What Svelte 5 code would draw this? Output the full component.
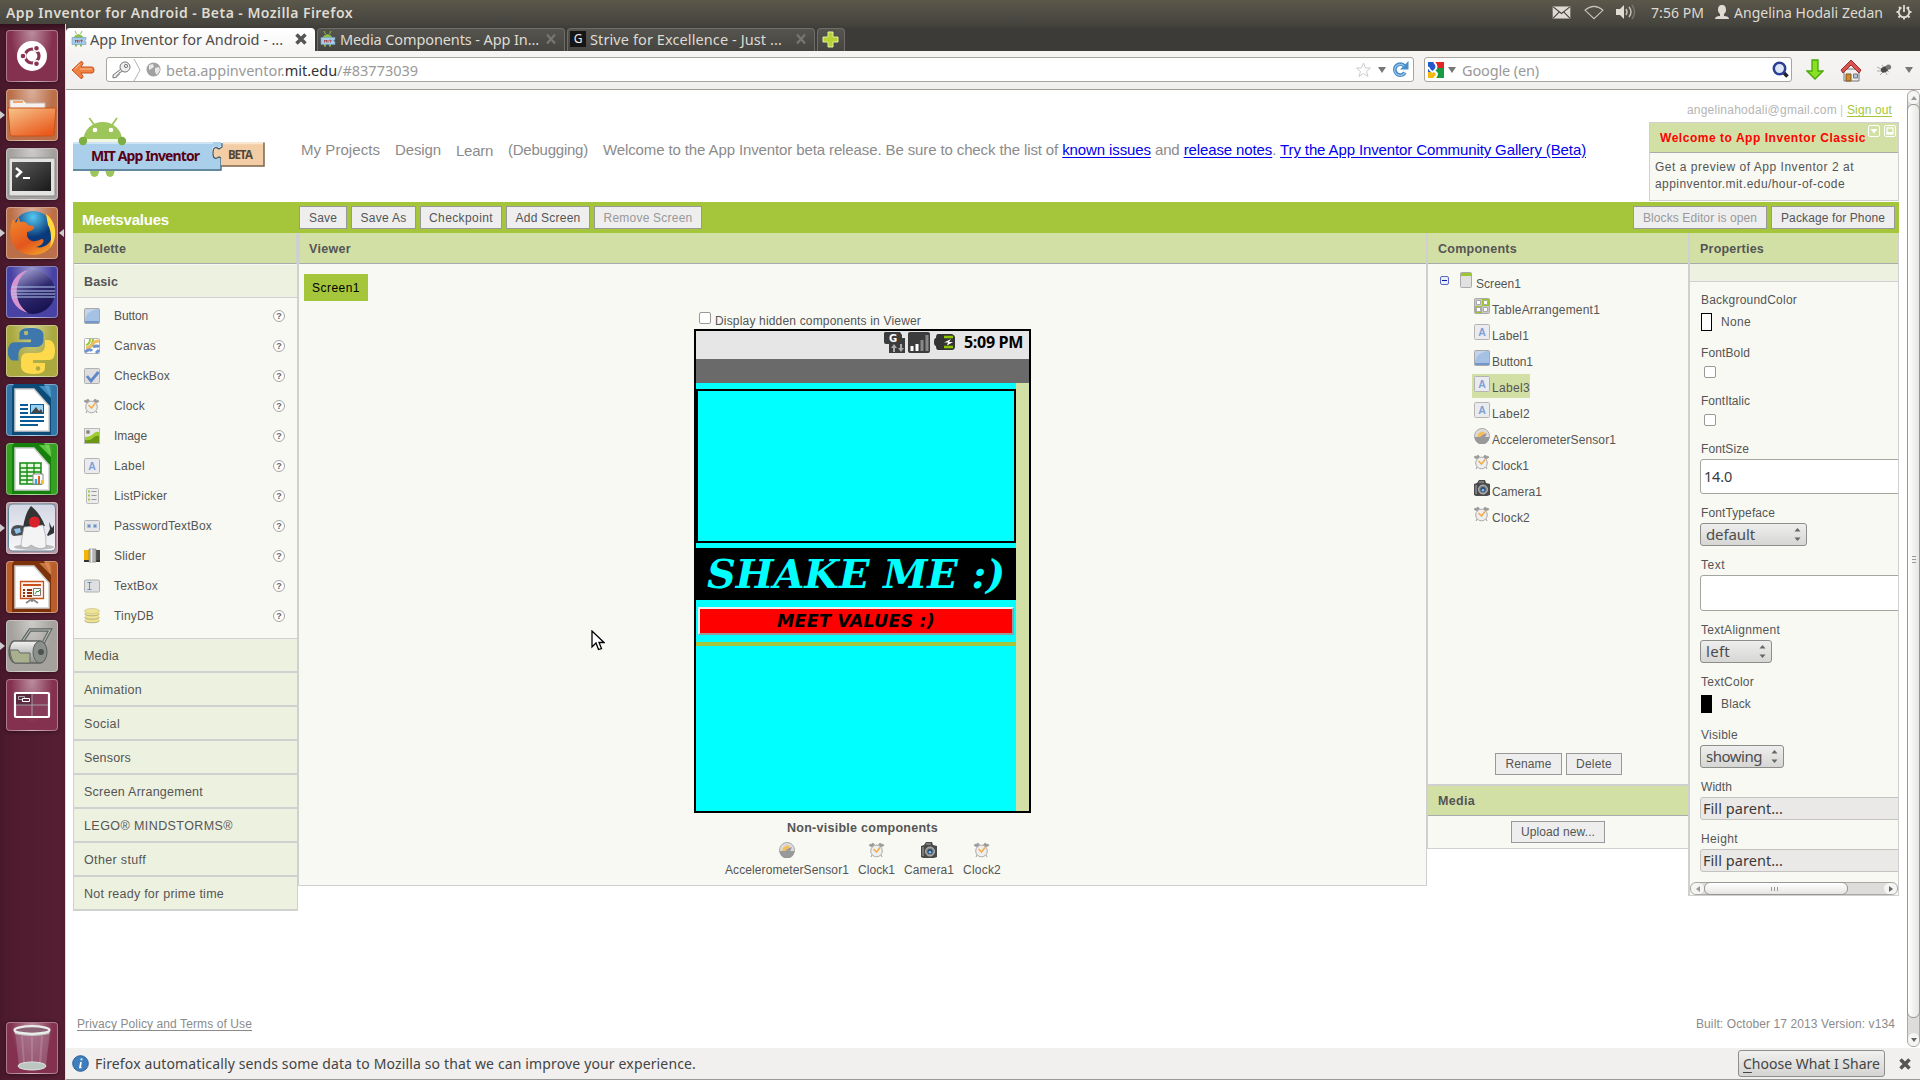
<script>
  // Spreads a run of text over a given width by adjusting its letter spacing.
  function fit(node, width) {
    if (!width) return;
    const natural = node.getBoundingClientRect().width;
    const count = node.textContent.length;
    node.style.letterSpacing = (width - natural) / count + 'px';
  }

  const launcher = ['ubuntu', 'files', 'terminal', 'firefox', 'eclipse', 'python', 'writer', 'calc', 'java', 'impress', 'ink', 'workspaces'];
  const running = { files: true, firefox: true, java: true, ink: true };

  const basic = [
    ['Button', 'button', 34], ['Canvas', 'canvas', 42], ['CheckBox', 'checkbox', 56], ['Clock', 'clock', 31],
    ['Image', 'image', 33], ['Label', 'label', 31], ['ListPicker', 'list', 53], ['PasswordTextBox', 'password', 98],
    ['Slider', 'slider', 32], ['TextBox', 'textbox', 44], ['TinyDB', 'db', 40]
  ];
  const categories = [
    ['Media', 35], ['Animation', 58], ['Social', 36], ['Sensors', 47], ['Screen Arrangement', 119],
    ['LEGO® MINDSTORMS®', 149], ['Other stuff', 62], ['Not ready for prime time', 140]
  ];
  const tree = [
    ['TableArrangement1', 'table', 108], ['Label1', 'label', 37], ['Button1', 'button', 41], ['Label3', 'label', 38],
    ['Label2', 'label', 38], ['AccelerometerSensor1', 'accel', 124], ['Clock1', 'clock', 37], ['Camera1', 'camera', 50],
    ['Clock2', 'clock', 38]
  ];
  const hidden = [['AccelerometerSensor1', 'accel', 124], ['Clock1', 'clock', 37], ['Camera1', 'camera', 50], ['Clock2', 'clock', 38]];
  const buttons = [['Save', 48, 24], ['Save As', 65, 42], ['Checkpoint', 82, 60], ['Add Screen', 84, 61], ['Remove Screen', 108, 85]];
  const props = [
    { name: 'BackgroundColor', w: 96, kind: 'swatch', value: 'None', vw: 30, first: true },
    { name: 'FontBold', w: 49, kind: 'check' },
    { name: 'FontItalic', w: 49, kind: 'check' },
    { name: 'FontSize', w: 48, kind: 'input', value: '14.0', vw: 28 },
    { name: 'FontTypeface', w: 74, kind: 'select', value: 'default', vw: 49, cw: 107 },
    { name: 'Text', w: 24, kind: 'input', value: '', tall: true },
    { name: 'TextAlignment', w: 79, kind: 'select', value: 'left', vw: 24, cw: 72 },
    { name: 'TextColor', w: 53, kind: 'swatch', value: 'Black', vw: 30, black: true },
    { name: 'Visible', w: 37, kind: 'select', value: 'showing', vw: 56, cw: 84 },
    { name: 'Width', w: 31, kind: 'fill', value: 'Fill parent...', vw: 80 },
    { name: 'Height', w: 37, kind: 'fill', value: 'Fill parent...', vw: 80 }
  ];
</script>

{#snippet T(text, w, cls = '')}<span class="t {cls}" use:fit={w}>{text}</span>{/snippet}

{#snippet favicon()}
  <svg width="16" height="16" viewBox="0 0 16 16">
    <path d="M3 6.500a5 5 0 0 1 9 0zM4 0l1.500 3M11 0L9.500 3" fill="#8cbf45" stroke="#8cbf45" />
    <path d="M4 13h2v2.500H4zM9 13h2v2.500H9z" fill="#8cbf45" />
    <path d="M1 6.500h14v2l-1.500 1.300L15 11v2.500H1z" fill="#a5cbe8" stroke="#6e9dbd" stroke-width=".6" />
    <path d="M4.500 11.500V9l1 1 1-1v2.500M8 9v2.500M9.300 9.300h2.400M10.500 9.300v2.200" fill="none" stroke="#a33" stroke-width=".8" />
  </svg>
{/snippet}

{#snippet cross(c)}
  <svg width="12" height="12" viewBox="0 0 12 12"><path d="M1.500 1.500l9 9M10.500 1.500l-9 9" stroke={c} stroke-width="3.500" /></svg>
{/snippet}

{#snippet thin()}
  <svg width="12" height="12" viewBox="0 0 12 12"><path d="M2 1.500l8 9M10 1.500l-8 9" stroke="#777670" stroke-width="2.200" /></svg>
{/snippet}

{#snippet icon(kind)}
  <svg class="ic" width="16" height="16" viewBox="0 0 16 16">
    {#if kind === 'button'}
      <rect x=".5" y=".5" width="15" height="15" rx="1" fill="#a5c1e4" stroke="#a9a9a9" />
      <path d="M1 1h12Q3 3 1 11z" fill="#c3d5ec" /><path d="M1 13h14v2H1z" fill="#7397cc" />
    {:else if kind === 'canvas'}
      <rect x=".5" y=".5" width="15" height="15" rx="1" fill="#fff" stroke="#b5b5b5" />
      <path d="M2 7Q6 6 6 1M4 9Q9 7 9 1" stroke="#9cc63a" stroke-width="2" fill="none" />
      <path d="M2 10Q8 9 9 6T15 3" stroke="#f3bd62" stroke-width="3" fill="none" />
      <path d="M1 14Q6 10 8 13M9 9Q13 7 15 9M12 15l3-3" stroke="#6f94cf" stroke-width="3" fill="none" />
    {:else if kind === 'checkbox'}
      <rect x=".5" y=".5" width="15" height="15" rx="1" fill="#dedee0" stroke="#b0b0b0" />
      <path d="M3 8l4 5L14.500 4" stroke="#6088c9" stroke-width="2.800" fill="none" />
    {:else if kind === 'clock'}
      <path d="M0 3.500L1 2l1 .500L4 1l1.500 1.500L3 5zM15 3.500L14 2l-1 .500L11 1 9.500 2.500 12 5z" fill="#999" stroke="#999" stroke-width=".6" />
      <path d="M3 13l-1 2M12 13l1 2" stroke="#999" />
      <circle cx="7.500" cy="9" r="5.800" fill="#efefef" stroke="#aaa" /><path d="M4.500 7l3 3 3.500-4.500" stroke="#f3ae4b" stroke-width="1.600" fill="none" />
    {:else if kind === 'image'}
      <rect x=".5" y=".5" width="15" height="15" fill="#e9e9e9" stroke="#b9b9b9" />
      <circle cx="4" cy="4" r="2" fill="#8b8b8b" /><path d="M1 9Q6 9 9 6T15 4v11H1z" fill="#9fca33" /><path d="M1 15v-3Q6 13 9 10t6-2v7z" fill="#6a9614" />
    {:else if kind === 'label'}
      <rect x=".5" y=".5" width="15" height="15" rx="1" fill="#eaebee" stroke="#b4b4b4" />
      <text x="8" y="12" text-anchor="middle" class="glyphA">A</text>
    {:else if kind === 'list'}
      <rect x="2.500" y=".5" width="12" height="15" rx="1" fill="#ececec" stroke="#b9b9b9" />
      <path d="M4 3.500h2M4 7.500h2M4 11.500h2" stroke="#a0c93a" stroke-width="2" /><path d="M7.500 3.500h5M7.500 7.500h5M7.500 11.500h5" stroke="#999" />
    {:else if kind === 'password'}
      <rect x=".5" y="2.500" width="15" height="11" rx="1" fill="#e5e6e8" stroke="#b4b4b4" />
      <path d="M5 6v4M3 8h4M3.600 6.600l2.800 2.800M6.400 6.600L3.600 9.400M11 6v4M9 8h4M9.600 6.600l2.800 2.800M12.400 6.600L9.600 9.400" stroke="#6d93cb" />
    {:else if kind === 'slider'}
      <path d="M0 2h5v11H0z" fill="#f4b606" /><path d="M11 2h5v11h-5z" fill="#4d4d4d" /><path d="M0 12h16v2H0z" fill="#333" />
      <path d="M5 1h7v13H5z" fill="#b5b5b5" stroke="#777" stroke-width=".6" /><path d="M7.500 1v13" stroke="#eee" stroke-width="1.500" />
    {:else if kind === 'textbox'}
      <rect x=".5" y="2" width="15" height="12" rx="1" fill="#dedfe1" stroke="#b0b0b0" />
      <path d="M3.500 4.500h4M3.500 11.500h4M5.500 4.500v7" stroke="#6d8fc0" />
    {:else if kind === 'db'}
      <path d="M1 3v9.500c0 3 14 3 14 0V3z" fill="#ede292" /><path d="M.5 5.500c0 3 15 3 15 0M.5 9c0 3 15 3 15 0M.5 12.500c0 3 15 3 15 0" fill="none" stroke="#b8b27f" /><ellipse cx="8" cy="3" rx="7.500" ry="2.500" fill="#efe59a" stroke="#c9c387" stroke-width=".7" />
    {:else if kind === 'table'}
      <rect x=".5" y=".5" width="15" height="15" rx="1" fill="#c9c9c9" stroke="#aaa" /><path d="M8 1h7v7H8zM1 8h7v7H1z" fill="#9bc531" />
      <path d="M2.500 2.500h4v4h-4zM9.500 2.500h4v4h-4zM2.500 9.500h4v4h-4zM9.500 9.500h4v4h-4z" fill="#fff" stroke="#aaa" />
    {:else if kind === 'accel'}
      <circle cx="8" cy="8" r="7.500" fill="#dcdcdc" stroke="#aaa" /><path d="M3 9Q4 3 10 3.500l1 2L7 9z" fill="#f6bd60" />
      <path d="M.5 9H6q3-3 7-4-1 3-2 4h4.500a7.500 7.500 0 0 1-15 0z" fill="#999" />
    {:else if kind === 'camera'}
      <path d="M0 4l3-1 2-3h6l1 3 4 1v11l-3 1H2l-2-1z" fill="#4a4a4a" /><path d="M5 2h5M2 5v9" stroke="#aaa" />
      <circle cx="9" cy="9.500" r="4.500" fill="#888" stroke="#ccc" stroke-width=".8" /><circle cx="9" cy="9.500" r="2.600" fill="#22486f" /><circle cx="9" cy="10.200" r="1.400" fill="#7ab8ef" />
    {/if}
  </svg>
{/snippet}

{#snippet doc(c, d)}
  <path d="M8 0h30l7 14v37H6V3z" fill={d} />
  <path d="M33 2h10q2 4 2 12z" fill={c} opacity=".7" />
  <path d="M9 5h19l15 17v25H9z" fill="#fff" stroke="#cfcfcf" stroke-width="1.500" />
{/snippet}

{#snippet app(kind)}
  <svg width="52" height="52" viewBox="0 0 52 52">
    {#if kind === 'ubuntu'}
      <circle cx="26" cy="26" r="15" fill="#fff" />
      <circle cx="26" cy="26" r="7" fill="none" stroke="#8a3454" stroke-width="3.200" />
      <g fill="#8a3454" stroke="#fff" stroke-width="1.400"><circle cx="17" cy="26" r="3" /><circle cx="30.500" cy="18.200" r="3" /><circle cx="30.500" cy="33.800" r="3" /></g>
    {:else if kind === 'files'}
      <path d="M4 11h13l3 3h19v9H4z" fill="#f4f1ee" stroke="#c9b7a8" /><path d="M7 13h10" stroke="#f3a36a" stroke-width="2" />
      <path d="M2 19h48l-2 26q0 2-2 2H6q-2 0-2-2z" fill="url(#gOrange)" stroke="#c9521c" />
    {:else if kind === 'terminal'}
      <rect x="3" y="10" width="46" height="38" rx="1" fill="#e2e2e0" stroke="#888" /><rect x="6" y="14" width="39" height="29" fill="url(#gDark)" />
      <path d="M10 20l5 4-5 5" fill="none" stroke="#fff" stroke-width="2.500" /><path d="M17 30h7" stroke="#fff" stroke-width="2" />
    {:else if kind === 'firefox'}
      <circle cx="27" cy="24" r="20" fill="url(#gBlue)" />
      <path d="M40 7c12 9 12 27 2 36-10 8-26 6-33-3C2 31 4 18 7 12l3 4 3-6 1 5c5-1 7 1 8 3l6 1c1 3-3 5-7 6 0 4 0 7 5 9 5 1 9-2 10-2 4 1 0 7-6 8 8 2 15-4 17-11 1-7-1-15-3-22z" fill="url(#gFox)" />
      <path d="M40 7c11 8 12 24 4 34 2-9 1-18-2-23z" fill="#ffd93d" />
    {:else if kind === 'eclipse'}
      <circle cx="27" cy="26" r="22" fill="url(#gEclipse)" /><path d="M22 4a22 22 0 0 0 0 43A26 26 0 0 1 22 4" fill="#d795cf" />
      <path d="M6 21h43M5 25h44M5 28h44M6 31h43" stroke="#b4c7ee" stroke-width="1.200" />
    {:else if kind === 'python'}
      <path d="M26 3c-9 0-11 3-11 7v5h12v3H10c-5 0-7 5-7 10s2 9 7 9h4v-6c0-5 3-8 8-8h11c4 0 7-3 7-7v-6c0-5-5-7-14-7z" transform="translate(-1 0) scale(.96)" fill="#3d77ab" />
      <path d="M28 49c9 0 11-3 11-7v-4H27v-3h16c5 0 6-5 6-10s-2-10-7-10h-3v5c0 5-3 8-8 8H21c-4 0-6 3-6 7v6c0 5 4 8 13 8z" fill="#ffd94c" />
      <circle cx="20" cy="8" r="2.200" fill="#b2bb73" /><circle cx="32" cy="43.500" r="2.200" fill="#b2a83b" />
    {:else if kind === 'writer'}
      {@render doc('#5aa8dc', '#0c4a78')}
      <path d="M14 21h8M14 25h8M14 29h8M14 33h24M14 37h24M14 41h18" stroke="#0d5b93" stroke-width="2" />
      <path d="M24 20h14v10H24z" fill="#0d5b93" /><path d="M25 29v-8h12v8z" fill="#96d0f0" /><path d="M25 29l5-6 3 4 2-2 2 4z" fill="#444" />
    {:else if kind === 'calc'}
      {@render doc('#7fdf5c', '#16800d')}
      <path d="M14 20h21v21H14z" fill="#e5f8dd" stroke="#138a10" stroke-width="1.500" /><path d="M14 25h21M14 29h21M14 33h21M14 37h21M21 20v21M28 20v21" stroke="#138a10" stroke-width="1.300" />
      <path d="M27 31h10v10H27z" fill="#fff" stroke="#888" /><path d="M30 41v-5" stroke="#36a9e0" stroke-width="2.500" /><path d="M33 41v-8" stroke="#e2612a" stroke-width="2" /><path d="M36 41v-4" stroke="#f3c22d" stroke-width="2" />
    {:else if kind === 'java'}
      <rect x="2.500" y="2" width="47" height="47" rx="4" fill="url(#gPaper)" stroke="#5d8396" />
      <ellipse cx="28" cy="45" rx="20" ry="3" fill="#999" opacity=".6" />
      <path d="M5 30q0-7 7-7l7 1-2 9-9 1q-3-1-3-4z" fill="#4a4f54" /><path d="M8 27l6-1 1 4-5 2z" fill="#8fc2e8" />
      <path d="M41 33l3-6-1-7 3 6 2-3v8l-6 3z" fill="#333" />
      <path d="M25 4q9 7 14 20l-22 2Q19 11 25 4z" fill="#343434" /><path d="M18 25q-3 15-3 19 5 4 10-1 9 6 15 2 1-10-3-22z" fill="#f4f4f4" stroke="#999" stroke-width=".6" />
      <circle cx="28.500" cy="20" r="5.500" fill="#d9222a" />
    {:else if kind === 'impress'}
      {@render doc('#e69458', '#7c310a')}
      <path d="M14.500 20.500h23v17h-23z" fill="#fdf3ec" stroke="#c9501a" stroke-width="1.300" /><path d="M17 24h18" stroke="#c9501a" stroke-width="2" />
      <path d="M21 29h5M21 32h5M21 35h5M17 29h2M17 32h2M17 35h2" stroke="#8c3510" stroke-width="1.800" /><path d="M27.500 27.500h7v7h-7z" fill="#fff" stroke="#777" /><path d="M29 33l2-3 1 1 2-2" stroke="#2a9c2a" fill="none" />
      <path d="M26 38l-6 4M26 38l6 4M26 38v3" stroke="#888" stroke-width="1.800" />
    {:else if kind === 'ink'}
      <path d="M16 22l8-12h20L35 27" fill="none" stroke="#5f6561" stroke-width="3.500" /><path d="M16 22l8-12h20L35 27" fill="none" stroke="#b4bab5" stroke-width="1.200" />
      <path d="M8 21h26q6 1 6 11t-6 11H9q-6-2-6-12 1-9 5-10z" fill="url(#gMetal)" stroke="#5f635f" stroke-width="1.500" />
      <path d="M4 30h8l2 3h10v10H9q-4-2-5-13z" fill="#a9b08d" stroke="#666" /><ellipse cx="34" cy="32" rx="7" ry="11" fill="#8b908c" stroke="#5d615e" /><circle cx="35" cy="32" r="3" fill="#4f5350" />
    {:else if kind === 'workspaces'}
      <rect x="9" y="14" width="34" height="24" rx="1" fill="#873d5a" stroke="#fff" stroke-width="2.200" /><path d="M10 15h16v11H10z" fill="#5b2c40" />
      <path d="M26 15v22M10 26h32" stroke="#a2a2a2" /><path d="M12.500 17.500h6v3h-6z" fill="none" stroke="#aaa" /><path d="M16.500 19.500h7v3h-7z" fill="#5b2c40" stroke="#fff" />
    {:else}
      <path d="M9 9h35l-4 35q-13 6-27 0z" fill="#a5718a" opacity=".6" /><path d="M16 14l2 28M26 15v28M36 14l-2 28" stroke="#c9a3b5" opacity=".35" stroke-width="2" />
      <ellipse cx="26" cy="44" rx="14" ry="4" fill="#bcc6c0" stroke="#dfe5e2" /><path d="M8 8h36l-1 4q-17 4-34 0z" fill="#c3c9c5" /><ellipse cx="26" cy="8" rx="17.500" ry="3.800" fill="#8c6475" stroke="#e9eeeb" stroke-width="2.200" />
    {/if}
  </svg>
{/snippet}

<svg class="defs" width="0" height="0">
  <defs>
    <linearGradient id="gOrange" x1="0" y1="0" x2=".7" y2="1"><stop offset="0" stop-color="#f6c48b" /><stop offset="1" stop-color="#ea5a1d" /></linearGradient>
    <linearGradient id="gDark" x1="0" y1="0" x2="1" y2="1"><stop offset="0" stop-color="#5a5a5a" /><stop offset="1" stop-color="#191919" /></linearGradient>
    <radialGradient id="gBlue" cx=".5" cy=".15"><stop offset="0" stop-color="#55c9f2" /><stop offset="1" stop-color="#0b3a7a" /></radialGradient>
    <linearGradient id="gFox" x1=".2" y1="0" x2=".8" y2="1"><stop offset="0" stop-color="#f08a2c" /><stop offset=".6" stop-color="#e4561d" /><stop offset="1" stop-color="#f2a52b" /></linearGradient>
    <linearGradient id="gEclipse" x1=".2" y1="0" x2=".7" y2="1"><stop offset="0" stop-color="#a6a5d8" /><stop offset=".5" stop-color="#2f2a70" /><stop offset="1" stop-color="#17104e" /></linearGradient>
    <linearGradient id="gPaper" x1="0" y1="0" x2="0" y2="1"><stop offset="0" stop-color="#d3d6e3" /><stop offset="1" stop-color="#f7f7fa" /></linearGradient>
    <linearGradient id="gMetal" x1="0" y1="0" x2="0" y2="1"><stop offset="0" stop-color="#f4f4f2" /><stop offset="1" stop-color="#8d918c" /></linearGradient>
  </defs>
</svg>

<div class="desktop">
  <header class="panel">
    {@render T('App Inventor for Android - Beta - Mozilla Firefox', 347, 'title')}
    <div class="tray">
      <svg width="19" height="13" viewBox="0 0 20 14"><rect x=".5" y=".5" width="19" height="13" fill="#dfdbd2" /><path d="M1 1l9 7 9-7M1 13l7-7M19 13l-7-7" fill="none" stroke="#45433d" stroke-width="1.200" /></svg>
      <svg class="wifi" width="20" height="15" viewBox="0 0 21 15"><path d="M1 5Q10.500-3 20 5l-9.500 9z" fill="none" stroke="#c9c5bc" stroke-width="1.200" /></svg>
      <svg class="vol" width="20" height="16" viewBox="0 0 20 16"><path d="M0 5h4l4-4v14l-4-4H0z" fill="#dfdbd2" /><path d="M10 5q2 3 0 6M13 3q4 5 0 10" fill="none" stroke="#c5c1b8" stroke-width="1.500" /><path d="M16 1q5 7 0 14" fill="none" stroke="#77746c" stroke-width="1.500" /></svg>
      {@render T('7:56 PM', 53, 'clocktext')}
      <svg class="user" width="14" height="14" viewBox="0 0 14 14"><path d="M7 0c3 0 4 2 4 5 0 2-1 3-2 4v2c3 0 5 1 5 3H0c0-2 2-3 5-3V9C4 8 3 7 3 5c0-3 1-5 4-5z" fill="#dfdbd2" /></svg>
      {@render T('Angelina Hodali Zedan', 149, 'who')}
      <svg class="gear" width="16" height="16" viewBox="0 0 16 16"><g stroke="#dfdbd2" fill="none"><path d="M5.500 3.500a5.200 5.200 0 1 0 5 0" stroke-width="1.800" /><path d="M8 1v7" stroke-width="1.800" /><path d="M3 3l1.500 1.500M13 3l-1.500 1.500M.5 8H3M15.500 8H13M2.500 13.500L4 12M13.500 13.500L12 12M8 13v2.500" stroke-width="2" /></g></svg>
    </div>
  </header>

  <div class="below">
    <aside class="launcher">
      {#each launcher as kind}
        <div class="tile {kind}" class:running={running[kind]}>{@render app(kind)}</div>
      {/each}
      <div class="tile trash">{@render app('trash')}</div>
    </aside>

    <div class="window">
      <div class="tabs">
        <div class="tab active">{@render favicon()}{@render T('App Inventor for Android - ...', 193)}<i></i>{@render cross('#555')}</div>
        <div class="tab">{@render favicon()}{@render T('Media Components - App In...', 199)}<i></i>{@render thin()}</div>
        <div class="tab third"><b class="gicon">G</b>{@render T('Strive for Excellence - Just ...', 192)}<i></i>{@render thin()}</div>
        <div class="tab plus"><svg width="17" height="17" viewBox="0 0 17 17"><path d="M6 1h5v5h5v5h-5v5H6v-5H1V6h5z" fill="#b5d334" stroke="#e3f09a" /></svg></div>
      </div>

      <div class="toolbar">
        <svg class="back" width="24" height="20" viewBox="0 0 24 20"><path d="M10 1.500q2 0 2 2l-2 3.500h11q2 0 2 3t-2 3H10l2 3.500q0 2-2 2L1 10z" fill="#ef8243" stroke="#c9501a" /><path d="M4 9l5-5M9 9h12" stroke="#f8bf94" /></svg>
        <div class="url">
          <svg width="20" height="18" viewBox="0 0 20 18"><g fill="#eee" stroke="#777"><path d="M9 8L1 14l0 3 4-1v-2l2 0v-2l4-2z" /><circle cx="13" cy="6" r="5" /><circle cx="14" cy="5" r="1.600" /></g></svg>
          <svg class="chev" width="9" height="22" viewBox="0 0 9 22"><path d="M1 0l6 11-6 11" fill="none" stroke="#b5b3b0" /></svg>
          <svg class="globe" width="15" height="15" viewBox="0 0 15 15"><circle cx="7.500" cy="7.500" r="7" fill="#a1a1a1" /><path d="M3 3l4-1 1 3-3 2-2 1zM9 6l4-1 1 3-3 5-2-3z" fill="#e8e8e8" /></svg>
          <span class="t addr" use:fit={252}>beta.appinventor.<b>mit.edu</b>/#83773039</span>
          <i></i>
          <svg width="17" height="16" viewBox="0 0 17 16"><path d="M8.500 1l2 5h5l-4 3.500 1.500 5-4.500-3-4.500 3L5.500 9.500l-4-3.500h5z" fill="#fff" stroke="#ccc" /></svg>
          <svg class="drop" width="8" height="6" viewBox="0 0 8 6"><path d="M0 0h8L4 6z" fill="#777" /></svg>
          <svg class="reload" width="16" height="17" viewBox="0 0 16 17"><path d="M12 11.500A5.500 5.500 0 1 1 11.500 5" fill="none" stroke="#4b8fca" stroke-width="3.800" /><path d="M15.500 0v8.500H7z" fill="#4b8fca" /><path d="M12 11.500A5.500 5.500 0 1 1 11 5" fill="none" stroke="#9cc6e8" stroke-width="1.200" /></svg>
        </div>
        <div class="search">
          <svg width="16" height="16" viewBox="0 0 16 16"><path d="M0 0h16v16H0z" fill="#fff" /><path d="M8 0h8v6H8z" fill="#e22626" /><path d="M8 6h8v10H8z" fill="#199b45" /><path d="M0 0h8v10H0z" fill="#2258c9" /><path d="M0 10h9v6H0z" fill="#f5b912" /><path d="M6 0q5 5 0 9 6 3 0 7M0 5q3 5 5 5" fill="none" stroke="#fff" stroke-width="2" /></svg>
          <svg class="drop" width="8" height="6" viewBox="0 0 8 6"><path d="M0 0h8L4 6z" fill="#777" /></svg>
          {@render T('Google (en)', 77, 'ph')}
          <i></i>
          <svg width="17" height="17" viewBox="0 0 17 17"><path d="M10.500 10.500l5 5" stroke="#222" stroke-width="3.500" /><circle cx="7.500" cy="7.500" r="5.700" fill="#dce6f4" stroke="#2b3f95" stroke-width="2.500" /></svg>
        </div>
        <svg class="down" width="18" height="22" viewBox="0 0 18 22"><path d="M6 1h6v11h5l-8 8-8-8h5z" fill="#8ae022" stroke="#4ba60b" stroke-width="1.300" /></svg>
        <svg class="home" width="22" height="23" viewBox="0 0 22 23"><path d="M4 10h15v12H4z" fill="#eee" stroke="#777" /><path d="M11 1L1 11l2 3 8-8 8 8 2-3z" fill="#d55351" stroke="#a12b2b" /><path d="M6 15h5v7H6z" fill="#cf8b30" stroke="#84561b" /><path d="M13.500 15h4v4h-4z" fill="#aec5dd" stroke="#777" /></svg>
        <svg class="fly" width="16" height="14" viewBox="0 0 16 14"><path d="M1 4l6 3M1 8h6M4 12l4-4M11 12L9 8M6 2l2 3M13 9l-3-2" stroke="#aaa" /><ellipse cx="8.500" cy="6.500" rx="3.800" ry="2.800" transform="rotate(-25 8.500 6.500)" fill="#4a4a4a" /><circle cx="12.500" cy="4" r="2.600" fill="#777" /></svg>
        <svg class="drop last" width="8" height="6" viewBox="0 0 8 6"><path d="M0 0h8L4 6z" fill="#777" /></svg>
      </div>

      <div class="viewport">
        <main class="page">
          <div class="masthead">
            <div class="logo">
              <svg width="192" height="62" viewBox="0 0 192 62">
                <path d="M10.500 24a19.200 18 0 0 1 38.500 0z" fill="#9cc55a" /><path d="M16.300 2l5 7M44 2l-5 7" stroke="#9cc55a" stroke-width="1.800" /><path d="M14 23h31v4H14z" fill="#f0f7df" />
                <circle cx="22" cy="14" r="2.300" fill="#fff" /><circle cx="38" cy="14" r="2.300" fill="#fff" />
                <ellipse cx="21.500" cy="55" rx="4.500" ry="6" fill="#9cc55a" /><ellipse cx="37" cy="55" rx="4.500" ry="6" fill="#9cc55a" />
                <path d="M0 26h148v4l-3 2q-6-4-6 4 0 7 6 4l3 3v12H0z" fill="#a9cfeb" /><path d="M0 27h140" stroke="#cfe5f5" stroke-width="2" /><path d="M0 54h148v-12" fill="none" stroke="#4c7389" stroke-width="1.500" />
                <path d="M150 26.500h41V50h-43v-8q-7 3-7-5 0-7 6-4l3-2z" fill="#f2cda6" /><path d="M150 27.500h40" stroke="#fae6cf" stroke-width="1.500" /><path d="M191 26.500V50h-43" fill="none" stroke="#7d654c" stroke-width="1.500" /><path d="M149 27v4l-3 2q-6-4-6 4t6 4l2 1" fill="none" stroke="#3f5661" stroke-width="1.300" />
                <circle cx="10" cy="25" r="4.200" fill="#7fae45" /><circle cx="49" cy="25" r="4.200" fill="#7fae45" />
                <text x="18" y="44.500" class="lg" textLength="109">MIT App Inventor</text>
                <text x="155" y="43" class="bt" textLength="25">BETA</text>
              </svg>
            </div>
            <nav>
              {@render T('My Projects', 79)}{@render T('Design', 46)}{@render T('Learn', 37, 'learn')}{@render T('(Debugging)', 80)}
              <p class="t" use:fit={983}>Welcome to the App Inventor beta release. Be sure to check the list of <a href="#issues">known issues</a> and <a href="#notes">release notes</a>. <a href="#gallery">Try the App Inventor Community Gallery (Beta)</a></p>
            </nav>
            <div class="account">
              <div class="user-line">{@render T('angelinahodali@gmail.com', 150)}<em>|</em><a class="t out" href="#out" use:fit={45}>Sign out</a></div>
              <div class="welcome">
                <div class="whead">{@render T('Welcome to App Inventor Classic', 206)}
                  <svg width="29" height="13" viewBox="0 0 29 13"><g fill="none" stroke="#fff"><rect x=".5" y=".5" width="11" height="11" rx="1.500" /><rect x="16.500" y=".5" width="11" height="11" rx="1.500" /><rect x="19" y="3" width="6" height="6" stroke-width="1.300" /></g><path d="M2.500 4h7L6 8.500zM19 7h6v2h-6z" fill="#fff" /></svg>
                </div>
                <div class="wbody">{@render T('Get a preview of App Inventor 2 at', 199)}{@render T('appinventor.mit.edu/hour-of-code', 190)}</div>
              </div>
            </div>
          </div>

          <div class="greenbar">
            <div class="project">{@render T('Meetsvalues', 87)}</div>
            {#each buttons as [label, w, tw], i}
              <button class="btn" class:off={i === 4} style:width="{w}px">{@render T(label, tw + 4)}</button>
            {/each}
            <i></i>
            <button class="btn off blocks">{@render T('Blocks Editor is open', 114)}</button>
            <button class="btn pack">{@render T('Package for Phone', 104)}</button>
          </div>

          <div class="columns">
            <section class="palette">
              <h2>{@render T('Palette', 42)}</h2>
              <h3>{@render T('Basic', 34)}</h3>
              <ul>
                {#each basic as [name, kind, w]}
                  <li>{@render icon(kind)}{@render T(name, w)}<i></i><span class="help">?</span></li>
                {/each}
              </ul>
              {#each categories as [name, w]}
                <div class="cat">{@render T(name, w)}</div>
              {/each}
            </section>

            <section class="viewer">
              <h2>{@render T('Viewer', 42)}</h2>
              <div class="canvas">
                <div class="screentab">{@render T('Screen1', 48)}</div>
                <div class="stage">
                  <div class="show"><span class="cb"></span>{@render T('Display hidden components in Viewer', 206)}</div>
                  <div class="phone">
                    <div class="status">
                      <svg width="73" height="22" viewBox="0 0 73 22">
                        <path d="M1 0h15l2 3v3h3v15H5v-9H2q-2 0-2-2V1z" fill="#3c3c3c" /><text x="5" y="9.500" class="g3">G</text><path d="M10 12l-3 4h2v4h2v-4h2zM17 20l-3-4h2v-4h2v4h2z" fill="#aaa" />
                        <rect x="24" width="22" height="21" rx="2" fill="#3c3c3c" /><path d="M28 19v-5M33 19v-7" stroke="#fff" stroke-width="3" /><path d="M38 19V8M43 19V3" stroke="#888" stroke-width="3" />
                        <path d="M54 2h14q3 1 3 4v8q0 4-3 4H54q-2 0-2-4-2 0-2-4t2-4q0-4 2-4z" fill="#333" /><path d="M60 5h9M60 15h9" stroke="#8cc400" stroke-width="2.500" /><path d="M67 7l-7 3.500h4l-1 3 6-3.500h-4z" fill="#fff" />
                      </svg>
                      {@render T('5:09 PM', 59)}
                    </div>
                    <div class="titlebar"></div>
                    <div class="form">
                      <div class="fields">
                        <div class="tablebox"></div>
                        <div class="shake">{@render T('SHAKE ME :)', 298)}</div>
                        <div class="meet">{@render T('MEET VALUES :)', 158)}</div>
                        <div class="empty"></div>
                      </div>
                    </div>
                  </div>
                  <div class="nonvis">{@render T('Non-visible components', 151)}</div>
                  <div class="hiddenlist">
                    {#each hidden as [name, kind, w]}
                      <div>{@render icon(kind)}{@render T(name, w)}</div>
                    {/each}
                  </div>
                </div>
              </div>
            </section>

            <section class="components">
              <h2>{@render T('Components', 79)}</h2>
              <div class="tree">
                <div class="root">
                  <svg width="9" height="9" viewBox="0 0 9 9"><rect x=".5" y=".5" width="8" height="8" rx="1.500" fill="#e9edf8" stroke="#5a6bc0" /><path d="M2 4.500h5" stroke="#11a" /></svg>
                  <svg class="scr" width="12" height="16" viewBox="0 0 12 16"><rect x=".5" y=".5" width="11" height="15" rx="1" fill="#e1e1e1" stroke="#aaa" /><path d="M1 1h10v3H1z" fill="#9bc531" /></svg>
                  {@render T('Screen1', 45)}
                </div>
                {#each tree as [name, kind, w]}
                  <div class="node"><span class="row" class:sel={name === 'Label3'}>{@render icon(kind)}{@render T(name, w)}</span></div>
                {/each}
                <i></i>
                <div class="acts"><button class="btn ren">{@render T('Rename', 46)}</button><button class="btn del">{@render T('Delete', 36)}</button></div>
              </div>
              <h2 class="mediahead">{@render T('Media', 37)}</h2>
              <div class="upload"><button class="btn upl">{@render T('Upload new...', 74)}</button></div>
            </section>

            <section class="properties">
              <h2>{@render T('Properties', 64)}</h2>
              <div class="strip"></div>
              <div class="plist">
                {#each props as p}
                  <div class="prop {p.kind}" class:tall={p.tall} class:dark={p.black} class:first={p.first}>
                    <div class="pname">{@render T(p.name, p.w)}</div>
                    {#if p.kind === 'swatch'}
                      <div class="sw"><span class="chip"></span>{@render T(p.value, p.vw)}</div>
                    {:else if p.kind === 'check'}
                      <span class="cb"></span>
                    {:else if p.kind === 'select'}
                      <div class="dd" style:width="{p.cw}px">{@render T(p.value, p.vw)}<i></i><svg width="7" height="13" viewBox="0 0 7 13"><path d="M.5 3.500h6L3.500 0zM.5 9.500h6L3.500 13z" fill="#666" /></svg></div>
                    {:else}
                      <div class="field">{#if p.value}{@render T(p.value, p.vw)}{/if}</div>
                    {/if}
                  </div>
                {/each}
              </div>
              <div class="hscroll"><b class="l"></b><span><u></u></span><b class="r"></b></div>
            </section>
          </div>

          <footer><a class="t priv" href="#privacy" use:fit={175}>Privacy Policy and Terms of Use</a>{@render T('Built: October 17 2013 Version: v134', 199)}</footer>
        </main>
        <div class="vscroll"><b class="up"></b><span><u></u></span><b class="dn"></b></div>
      </div>

      <div class="notice">
        <svg width="17" height="17" viewBox="0 0 17 17"><circle cx="8.500" cy="8.500" r="7.800" fill="#3e7ebc" stroke="#2a5f99" /><path d="M9.500 3.500v1.800M9 7l-1 5.500h1.500" stroke="#fff" stroke-width="1.700" fill="none" /></svg>
        {@render T('Firefox automatically sends some data to Mozilla so that we can improve your experience.', 601)}
        <i></i>
        <button class="choose"><span class="t" use:fit={137}><u>C</u>hoose What I Share</span></button>
        {@render cross('#555')}
      </div>
    </div>
  </div>

  <svg class="cursor" width="14" height="22" viewBox="0 0 14 22"><path d="M1 1v16l4-4 2.500 6.500 3-1L8 12.500h5z" fill="#fff" stroke="#000" stroke-width="1.300" /></svg>
</div>

<style>
  :global(body) { margin: 0; overflow: hidden; }
  .desktop { position: relative; width: 1920px; height: 1080px; overflow: hidden; display: flex; flex-direction: column; background: #fff; font-family: "Liberation Sans", Arial, sans-serif; font-size: 12px; color: #555; box-sizing: border-box; }
  .desktop * { box-sizing: border-box; }
  .defs { position: absolute; }
  .t { display: inline-block; white-space: pre; flex: none; }
  svg { flex: none; display: block; }
  i { flex: 1; }
  button { font: inherit; color: inherit; padding: 0; margin: 0; }

  .panel { height: 24px; flex: none; background: linear-gradient(#5b584b, #45443e); display: flex; align-items: center; padding: 0 8px 0 6px; justify-content: space-between; font-family: "Noto Sans", sans-serif; font-size: 14px; color: #dfdbd2; }
  .panel :global(.title) { font-weight: 600; }
  .tray { display: flex; align-items: center; height: 24px; }
  .wifi { margin-left: 13px; }
  .vol { margin-left: 12px; }
  .tray :global(.clocktext) { margin-left: 15px; }
  .user { margin: 0 5px 0 11px; }
  .gear { margin-left: 13px; }

  .below { display: flex; height: 1056px; }
  .launcher { width: 66px; border-right: 1px solid #ddd; background: linear-gradient(90deg, #4c1a2d, #571f34); box-shadow: inset 0 6px 6px -3px #2c0f1b; padding: 6px 0 6px 6px; display: flex; flex-direction: column; gap: 7px; flex: none; }
  .tile { position: relative; width: 52px; height: 52px; border-radius: 4px; border: 1px solid rgba(255, 255, 255, .35); box-shadow: 0 1px 4px rgba(0, 0, 0, .4); background: radial-gradient(ellipse at 50% 0, rgba(255, 255, 255, .45), transparent 60%) #84314f; flex: none; }
  .tile :global(svg) { margin: -1px; }
  .tile.files, .tile.firefox { background-color: #bb6f49; }
  .tile.terminal { background-color: #a5a19f; }
  .tile.eclipse { background-color: #4842a5; }
  .tile.python { background-color: #aaa93f; }
  .tile.writer { background-color: #3276a8; }
  .tile.calc { background-color: #35a021; }
  .tile.java { background-color: #b998a4; }
  .tile.impress { background-color: #b95e2b; }
  .tile.ink { background-color: #a5a29d; }
  .tile.trash { margin-top: auto; }
  .tile.running::before { content: ''; position: absolute; left: -7px; top: 21px; border: 4px solid transparent; border-left: 5px solid #ccc; border-right: 0; }
  .tile.firefox::after { content: ''; position: absolute; right: -7px; top: 21px; border: 4px solid transparent; border-right: 5px solid #ccc; border-left: 0; }

  .window { width: 1854px; display: flex; flex-direction: column; }
  .tabs { height: 27px; background: linear-gradient(#45443e, #3c3b37 5px); display: flex; align-items: flex-end; gap: 2px; font-family: "Noto Sans", sans-serif; font-size: 14.500px; color: #dfdbd2; flex: none; }
  .tab { height: 23px; width: 248px; padding: 0 7px 2px 2px; display: flex; align-items: center; border-radius: 4px 4px 0 0; background: linear-gradient(#55544f, #454440); border: 1px solid #6e6d68; border-bottom: 0; }
  .tab.active { background: linear-gradient(#fff, #f5f4f3); color: #4c4c4c; width: 249px; padding-left: 4px; border-color: #fff; }
  .tab .t { margin-left: 4px; }
  .tab.active .t { margin-left: 3px; }
  .tab.plus { width: 28px; padding: 0 0 1px 4px; margin-left: 0; }
  .gicon { width: 16px; height: 16px; background: #151515; color: #eee; font: 12px/16px "Noto Sans", sans-serif; text-align: center; }
  .toolbar { height: 39px; flex: none; background: linear-gradient(#f6f5f4, #f0efed); border-bottom: 1px solid #a09d99; display: flex; align-items: center; padding-left: 5px; font-family: "Noto Sans", sans-serif; font-size: 14.500px; }
  .url, .search { height: 25px; background: #fff; border: 1px solid #a6a5a0; border-radius: 3px; display: flex; align-items: center; margin-bottom: 1px; }
  .url { width: 1308px; margin-left: 11px; padding: 0 4px 0 5px; color: #999; }
  .chev { margin-left: 1px; }
  .globe { margin: 0 5px 0 4px; }
  .addr b { font-weight: 400; color: #333; }
  .drop { margin-left: 6px; }
  .reload { margin-left: 7px; }
  .search { width: 368px; margin-left: 10px; padding: 0 2px 0 3px; color: #999; }
  .search .drop { margin-left: 4px; margin-right: 6px; }
  .down { margin-left: 14px; }
  .home { margin-left: 16px; }
  .fly { margin-left: 14px; }
  .drop.last { margin-left: 13px; }

  .viewport { height: 958px; flex: none; display: flex; }
  .page { width: 1840px; padding: 0 7px; display: flex; flex-direction: column; }
  .masthead { height: 112px; width: 1826px; display: flex; flex: none; }
  .logo { width: 228px; padding-top: 26px; }
  .lg { font: bold 14px "Noto Sans", sans-serif; fill: #5a0014; }
  .bt { font: bold 11.500px "Open Sans", sans-serif; fill: #54463a; }
  nav { display: flex; gap: 15px; padding-top: 51px; font-size: 15px; line-height: 18px; color: #8b8b8b; height: 75px; width: 1348px; }
  nav p { margin: 0; }
  nav a { color: #00e; text-underline-offset: 2px; }
  nav :global(.learn) { margin-top: 1px; }
  .account { width: 250px; padding-top: 13px; }
  .user-line { display: flex; justify-content: flex-end; padding-right: 7px; color: #b5b5b5; height: 19px; line-height: 15px; }
  .user-line em { font-style: normal; margin: 0 4px 0 3px; color: #ccc; }
  .out { color: #a5c63b; text-decoration: underline; text-underline-offset: 2px; }
  .welcome { height: 79px; border: 1px solid #d0d0d0; background: #f8f9f3; }
  .whead { height: 30px; background: #d2e0a6; border-bottom: 1px solid #aaa; padding: 0 0 0 10px; display: flex; color: #f00; font-weight: bold; line-height: 31px; }
  .whead svg { margin: 2px 0 0 2px; }
  .wbody { padding: 6px 5px; line-height: 17px; display: flex; flex-direction: column; align-items: flex-start; }

  .greenbar { width: 1826px; height: 31px; flex: none; background: #a5c63b; display: flex; padding: 4px 4px 0 9px; }
  .greenbar .btn { margin-right: 4px; }
  .greenbar .pack { margin-right: 0; width: 124px; }
  .greenbar .blocks { width: 134px; }
  .project { width: 217px; color: #fff; font-weight: bold; font-size: 15px; line-height: 28px; }
  .btn { height: 23px; background: #eee; border: 1px solid #999; border-radius: 0; display: flex; justify-content: center; align-items: center; color: #555; flex: none; }
  .btn.off { color: #999; }

  .columns { display: flex; align-items: flex-start; width: 1826px; }
  h2 { margin: 0; height: 31px; background: #d2e0a6; border-bottom: 1px solid #aaa; font-size: 12.500px; line-height: 31px; padding: 1px 0 0 10px; color: #555; }
  section { background: #f8f9f3; flex: none; }
  .palette { width: 225px; border: solid #d0d0d0; border-width: 0 1px; }
  .palette h2 { border-right: 1px solid #d0d0d0; }
  h3 { margin: 1px 0 0; height: 33px; background: #edf1e0; border-bottom: 1px solid #d0d0d0; font-size: 12.500px; line-height: 33px; padding: 1px 0 0 10px; }
  ul { list-style: none; margin: 0; padding: 3px 0 7px; }
  li { height: 30px; display: flex; align-items: center; padding: 0 12px 0 10px; }
  li .t { margin-left: 14px; }
  .help { width: 12px; height: 12px; border: 1px solid #a6a6a6; border-radius: 50%; font: bold 9px/10px "Liberation Sans", sans-serif; text-align: center; color: #666; background: #fff; }
  .cat { height: 34px; background: #edf1e0; border-bottom: 2px solid #d0d0d0; padding-left: 10px; line-height: 34px; font-size: 12.500px; }
  ul + .cat { border-top: 1px solid #d0d0d0; height: 35px; }
  .glyphA { font: bold 10.500px "Liberation Sans", sans-serif; fill: #7e9fd6; }
  .g3 { font: bold 10px "DejaVu Sans", sans-serif; fill: #fff; }

  .viewer { width: 1129px; border: solid #d0d0d0; border-width: 0 1px 1px; }
  .viewer h2 { border-left: 1px solid #d0d0d0; padding-left: 9px; }
  .canvas { height: 621px; padding: 10px 0 0 5px; }
  .screentab { width: 64px; height: 27px; background: #a5c63b; color: #000; line-height: 29px; text-align: center; }
  .stage { width: 337px; margin: 11px 0 0 390px; }
  .show { display: flex; padding-left: 5px; height: 17px; line-height: 18px; }
  .cb { display: block; width: 12px; height: 12px; border: 1px solid #999; border-radius: 2px; background: #fff; flex: none; }
  .show .t { margin-left: 4px; }
  .phone { width: 337px; height: 484px; border: 2px solid #000; display: flex; flex-direction: column; }
  .status { height: 28px; background: #e6e6e6; display: flex; padding: 1px 6px 0 188px; justify-content: space-between; color: #000; font: 700 16px/20px "Open Sans", sans-serif; flex: none; }
  .titlebar { height: 24px; background: #6a6a6a; flex: none; }
  .form { flex: 1; background: #d2e0a6; padding-right: 13px; }
  .fields { background: #0ff; height: 428px; padding-top: 6px; }
  .tablebox { height: 154px; border: 2px solid #000; }
  .shake { margin-top: 5px; height: 52px; background: #000; color: #0ff; font: italic bold 40px/52px "DejaVu Serif", serif; text-align: center; }
  .meet { height: 28px; margin: 7px 2px; border: 2px outset #eee; background: #f00; color: #000; font: italic bold 17.500px/25px "DejaVu Sans", sans-serif; text-align: center; }
  .empty { height: 4px; background: #a5c63b; }
  .nonvis { text-align: center; font-weight: bold; font-size: 12.500px; height: 29px; line-height: 30px; }
  .hiddenlist { display: flex; gap: 9px; padding-left: 31px; }
  .hiddenlist div { display: flex; flex-direction: column; align-items: center; line-height: 14px; gap: 5px; }

  .components { width: 261px; border: solid #d0d0d0; border-width: 0 0 1px 1px; }
  .tree { height: 520px; padding: 8px 0 9px; display: flex; flex-direction: column; }
  .root { display: flex; height: 26px; padding-left: 12px; }
  .root svg { margin-top: 4px; }
  .root .scr { margin: 0 4px 0 11px; }
  .root .t { line-height: 24px; }
  .node { height: 26px; padding-left: 44px; }
  .row { display: inline-flex; height: 24px; padding: 2px 0 0 2px; margin-top: -2px; }
  .node .row .t { line-height: 24px; margin-left: 2px; }
  .node .sel { background: #d2e0a6; }
  .acts { display: flex; gap: 4px; padding-left: 67px; }
  .ren { width: 67px; height: 22px; }
  .del { width: 56px; height: 22px; }
  .mediahead { border-top: 2px solid #d0d0d0; height: 32px; padding-top: 0; line-height: 31px; }
  .upload { height: 32px; padding: 5px 0 0 83px; }
  .upl { width: 94px; height: 22px; }

  .properties { width: 211px; border: solid #d0d0d0; border-width: 0 1px 1px 2px; overflow: hidden; }
  .strip { height: 18px; background: #edf1e0; border-bottom: 1px solid #d0d0d0; }
  .plist { height: 600px; padding: 10px 0 0 10px; overflow: hidden; }
  .prop { width: 240px; }
  .pname { height: 14px; line-height: 15px; padding-left: 1px; }
  .first .pname { line-height: 17px; }
  .prop.swatch { height: 54px; }
  .prop.swatch.dark { height: 53px; }
  .prop.check { height: 48px; }
  .prop.input { height: 64px; }
  .prop.input.tall { height: 65px; }
  .prop.select, .prop.fill { height: 52px; }
  .prop.check .cb { margin: 6px 0 0 4px; }
  .sw { display: flex; align-items: center; margin: 7px 0 0 1px; gap: 9px; }
  .chip { width: 11px; height: 18px; border: 1px solid #000; background: #fff; }
  .dark .chip { background: #000; }
  .dark .sw { margin-top: 6px; }
  .field { margin-top: 3px; height: 35px; border: 1px solid #a5a5a0; border-radius: 3px; background: #fff; font: 14.500px/32px "Noto Sans", sans-serif; padding-left: 3px; color: #3a3a3a; }
  .tall .field { height: 36px; }
  .fill .field { height: 23px; line-height: 20px; background: #ebe9e7; border-color: #c5c3c0; padding-left: 2px; }
  .dd { margin-top: 3px; height: 23px; border: 1px solid #8d8d8a; border-radius: 3px; background: linear-gradient(#eee, #d6d6d4); display: flex; align-items: center; padding: 0 5px; font: 15px/21px "Noto Sans", sans-serif; color: #4c4c4c; }
  .hscroll { height: 13px; background: #dedcda; display: flex; border: 1px solid #aaa8a5; border-radius: 6px; align-items: center; }
  .hscroll b { width: 13px; height: 11px; background: #f5f5f4; border-radius: 6px; display: flex; align-items: center; justify-content: center; }
  .hscroll .r { margin-left: auto; }
  .hscroll b::after, .vscroll b::after { content: ''; border: 3px solid transparent; }
  .hscroll .l::after { border-right: 4px solid #999; border-left: 0; }
  .hscroll .r::after { border-left: 4px solid #666; border-right: 0; }
  .hscroll span { width: 144px; height: 13px; margin: -1px 0; border: 1px solid #989693; border-radius: 6px; background: linear-gradient(#fff, #e6e5e3); display: flex; align-items: center; justify-content: center; }
  .hscroll u { width: 7px; height: 4px; margin-right: 4px; background: repeating-linear-gradient(90deg, #999 0 1px, transparent 1px 3px); }
  .vscroll { width: 13px; height: 957px; margin-left: 1px; border: 1px solid #aaa8a5; border-radius: 6px; background: #dedcda; display: flex; flex-direction: column; align-items: center; }
  .vscroll b { width: 11px; height: 13px; background: #f5f5f4; border-radius: 6px; display: flex; align-items: center; justify-content: center; }
  .vscroll .dn { margin-top: auto; }
  .vscroll .up::after { border-bottom: 4px solid #999; border-top: 0; }
  .vscroll .dn::after { border-top: 4px solid #666; border-bottom: 0; }
  .vscroll span { width: 13px; height: 914px; border: 1px solid #989693; border-radius: 6px; background: linear-gradient(90deg, #fff, #e6e5e3); display: flex; align-items: center; justify-content: center; }
  .vscroll u { width: 4px; height: 7px; margin-bottom: 4px; background: repeating-linear-gradient(#999 0 1px, transparent 1px 3px); }

  footer { margin-top: auto; width: 1822px; padding-left: 4px; height: 32px; display: flex; justify-content: space-between; color: #8b8b8b; line-height: 16px; }
  .priv { color: #8b8b8b; text-underline-offset: 2px; }
  .notice { height: 32px; flex: none; background: #f1f0ee; border-bottom: 1px solid #999; display: flex; align-items: center; padding: 0 9px 0 6px; font-family: "Noto Sans", sans-serif; font-size: 14px; color: #444; }
  .notice > .t { margin-left: 6px; }
  .choose { width: 147px; height: 27px; border: 1px solid #8d8d8a; border-radius: 3px; background: linear-gradient(#f0f0ef, #d4d4d2); margin-right: 14px; display: flex; align-items: center; justify-content: center; }
  .choose u { text-underline-offset: 3px; }
  .cursor { position: absolute; left: 591px; top: 630px; }
</style>
